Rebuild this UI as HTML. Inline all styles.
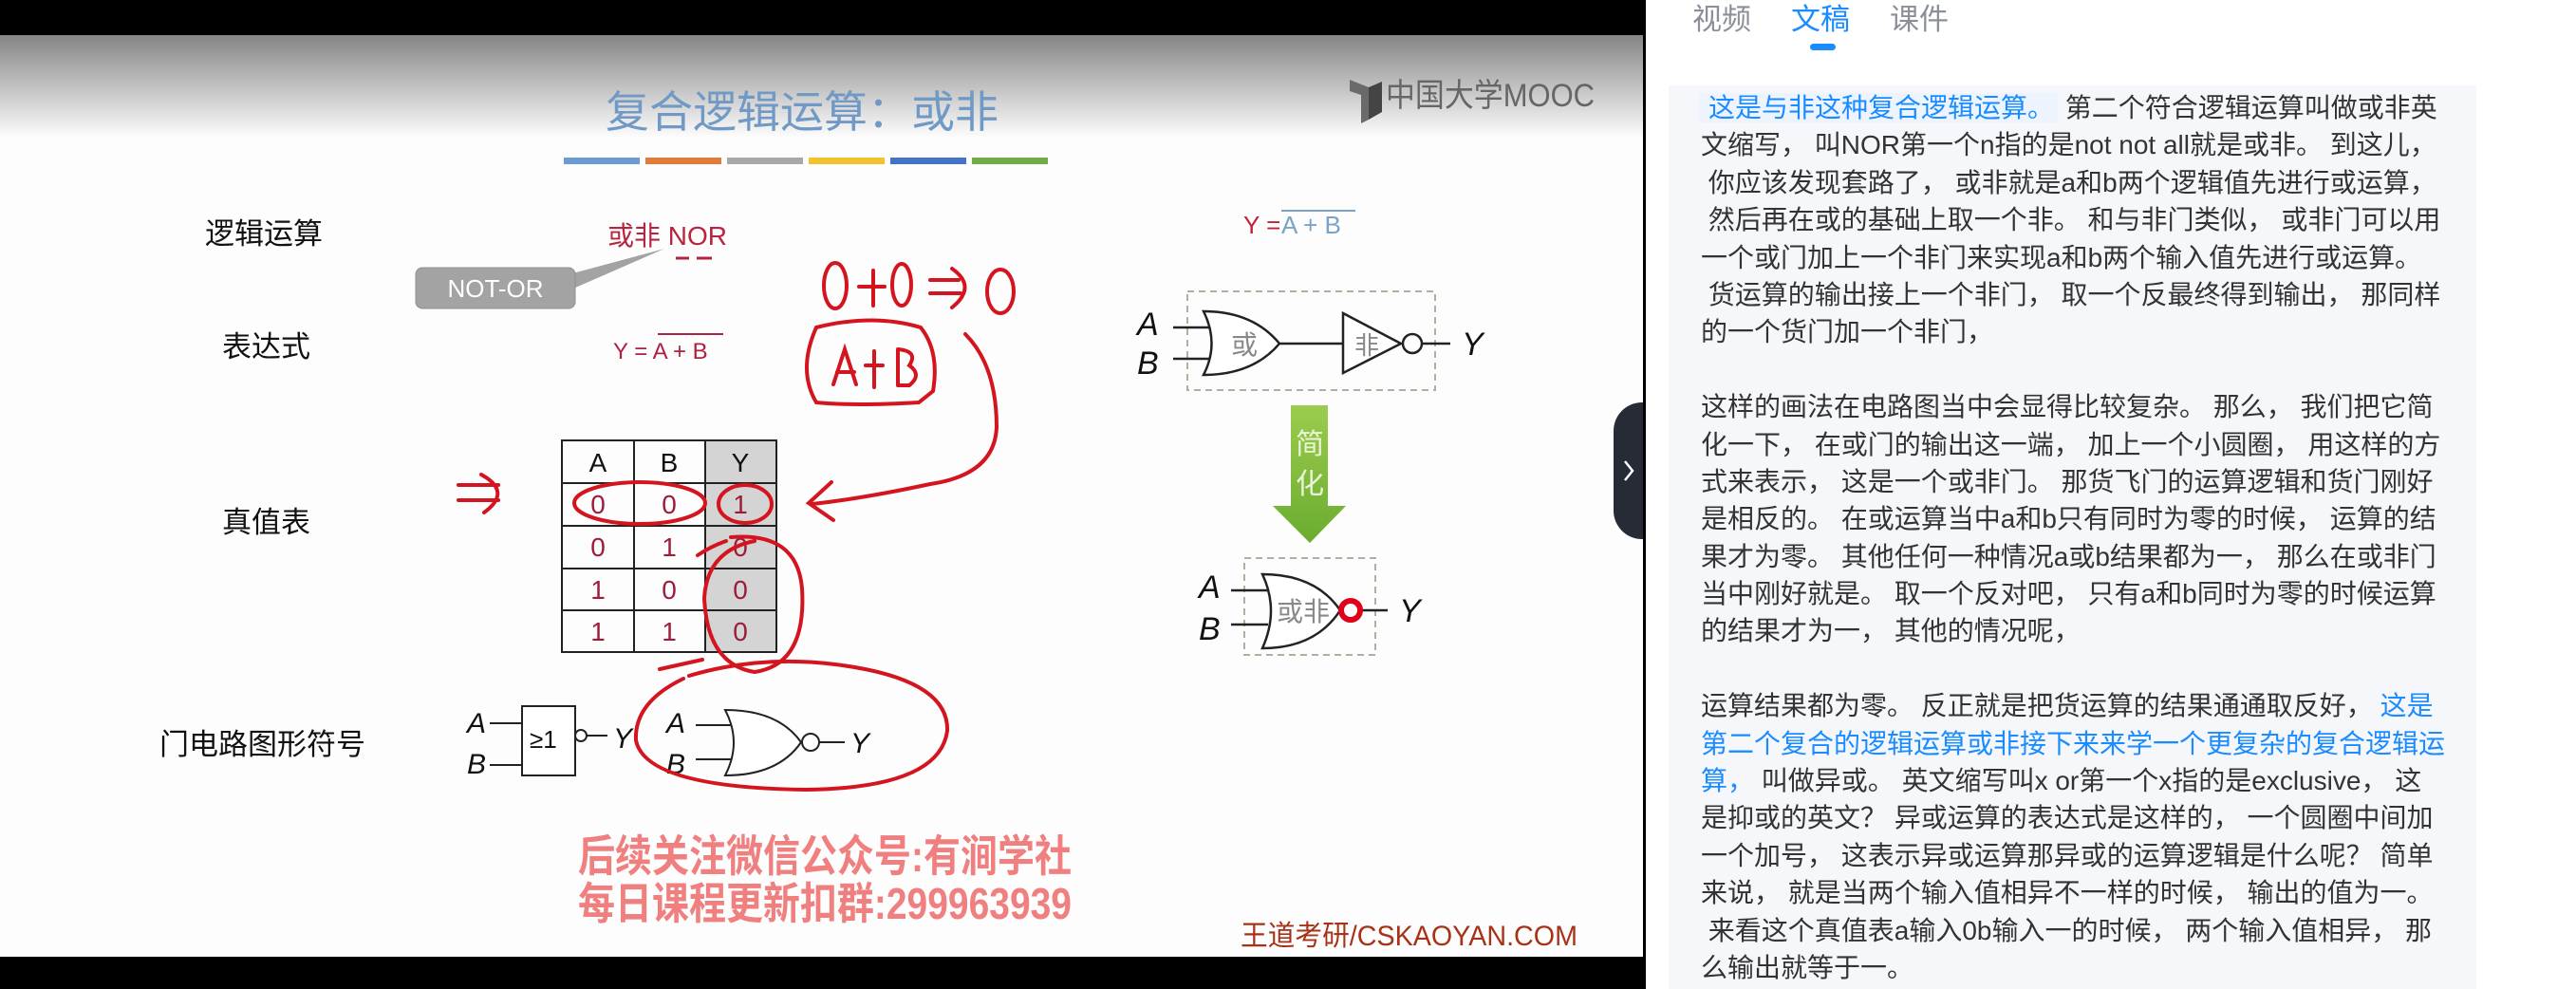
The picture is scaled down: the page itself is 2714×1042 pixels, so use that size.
<!DOCTYPE html>
<html><head><meta charset="utf-8">
<style>
html,body{margin:0;padding:0;width:2714px;height:1042px;overflow:hidden;background:#fff;}
.cjk{font-family:"Liberation Sans","Noto Sans CJK SC",sans-serif;}
#vid{position:absolute;left:0;top:0;}
.tabs{position:absolute;top:0;left:1783px;font-size:31px;color:#8a8f99;font-family:"Liberation Sans","Noto Sans CJK SC",sans-serif;line-height:42px;}
.tabs span{position:absolute;white-space:nowrap;}
.ul{position:absolute;left:1907px;top:46px;width:27px;height:7px;border-radius:4px;background:#1a8cff;}
.panel{position:absolute;left:1758px;top:90px;width:851px;height:952px;background:#f5f7fb;}
.txt{position:absolute;left:1792px;top:94px;font-size:28px;line-height:39.4px;color:#333;font-family:"Liberation Sans","Noto Sans CJK SC",sans-serif;white-space:nowrap;}
.txt div{height:39.4px;line-height:39.4px;overflow:visible;}
.b{color:#1a8cff;}
.hl{background:#edf4fd;color:#1a8cff;padding:0 4px 0 10px;margin-left:-2px;}
.handle{position:absolute;left:1700px;top:424px;width:31px;height:144px;background:#262b36;border-radius:30px 0 0 30px;}
</style></head><body>
<svg id="vid" width="1734" height="1042" viewBox="0 0 1734 1042" xmlns="http://www.w3.org/2000/svg">
<defs>
<linearGradient id="hg" x1="0" y1="0" x2="0" y2="1"><stop offset="0" stop-color="#858585"/><stop offset="1" stop-color="#ffffff"/></linearGradient>
<linearGradient id="gg" x1="0" y1="0" x2="0" y2="1"><stop offset="0" stop-color="#9ccc4e"/><stop offset="1" stop-color="#6aac2f"/></linearGradient>
</defs>
<rect x="0" y="0" width="1734" height="1042" fill="#fdfdfd"/>
<rect x="0" y="37" width="1731" height="110" fill="url(#hg)"/>
<rect x="0" y="0" width="1734" height="37" fill="#000"/>
<rect x="0" y="1008" width="1734" height="34" fill="#000"/>
<rect x="1731" y="0" width="3" height="1042" fill="#000"/>
<g class="cjk" font-family="Liberation Sans, Noto Sans CJK SC, sans-serif">
<text x="845" y="134" font-size="46" fill="#7099c6" text-anchor="middle">复合逻辑运算：或非</text>
<rect x="594" y="166" width="80" height="7" fill="#6b9bd1"/>
<rect x="680" y="166" width="80" height="7" fill="#e07b39"/>
<rect x="766" y="166" width="80" height="7" fill="#a8a8a8"/>
<rect x="852" y="166" width="80" height="7" fill="#f2c12e"/>
<rect x="938" y="166" width="80" height="7" fill="#4472c4"/>
<rect x="1024" y="166" width="80" height="7" fill="#70ad47"/>
<path d="M1422 84 L1442 92 L1442 126 L1434 130 L1434 100 L1422 96 Z" fill="#6a6a6a"/>
<path d="M1442 92 L1456 86 L1456 118 L1442 126 Z" fill="#444"/>
<text x="1460" y="112" font-size="34" fill="#666" textLength="220" lengthAdjust="spacingAndGlyphs">中国大学MOOC</text>
<text x="216" y="257" font-size="31" fill="#111">逻辑运算</text>
<text x="234" y="376" font-size="31" fill="#111">表达式</text>
<text x="234" y="561" font-size="31" fill="#111">真值表</text>
<text x="168" y="795" font-size="31" fill="#111">门电路图形符号</text>
<text x="640" y="258" font-size="28" fill="#b5253f">或非 NOR</text>
<path d="M712 272 h14 M734 272 h16" stroke="#b5253f" stroke-width="3"/>
<path d="M596 290 L700 262 L604 304 Z" fill="#a3a3a3"/>
<rect x="438" y="282" width="168" height="43" rx="7" fill="#a3a3a3" stroke="#8f8f8f"/>
<text x="522" y="313" font-size="26" fill="#fff" text-anchor="middle">NOT-OR</text>
<text x="646" y="378" font-size="24" fill="#b02040">Y = A + B</text>
<line x1="693" y1="352" x2="762" y2="352" stroke="#b02040" stroke-width="2"/>
<rect x="743" y="464" width="75" height="223" fill="#d4d4d4"/>
<g stroke="#222" stroke-width="2" fill="none">
<rect x="592" y="464" width="226" height="223"/>
<line x1="668" y1="464" x2="668" y2="687"/><line x1="743" y1="464" x2="743" y2="687"/>
<line x1="592" y1="509" x2="818" y2="509"/><line x1="592" y1="554" x2="818" y2="554"/>
<line x1="592" y1="599" x2="818" y2="599"/><line x1="592" y1="643" x2="818" y2="643"/>
</g>
<g font-size="28" text-anchor="middle">
<text x="630" y="497" fill="#111">A</text><text x="705" y="497" fill="#111">B</text><text x="780" y="497" fill="#111">Y</text>
<g fill="#9c1c3a">
<text x="630" y="541">0</text><text x="705" y="541">0</text><text x="780" y="541">1</text>
<text x="630" y="586">0</text><text x="705" y="586">1</text><text x="780" y="586">0</text>
<text x="630" y="631">1</text><text x="705" y="631">0</text><text x="780" y="631">0</text>
<text x="630" y="675">1</text><text x="705" y="675">1</text><text x="780" y="675">0</text>
</g></g>
<text x="1310" y="246" font-size="26" fill="#c0203a">Y =</text>
<text x="1350" y="246" font-size="26" fill="#7aa3c8">A + B</text>
<line x1="1350" y1="222" x2="1428" y2="222" stroke="#7aa3c8" stroke-width="2"/>
<rect x="1251" y="307" width="261" height="104" fill="none" stroke="#b0b0a0" stroke-width="2" stroke-dasharray="7 5"/>
<g stroke="#222" stroke-width="2.5" fill="none">
<line x1="1236" y1="345" x2="1275" y2="345"/><line x1="1236" y1="378" x2="1275" y2="378"/>
<path d="M1268 328 Q1320 328 1348 362 Q1320 395 1268 395 Q1285 362 1268 328 Z" fill="#fff"/>
<line x1="1348" y1="362" x2="1415" y2="362"/>
<path d="M1415 330 L1415 393 L1476 362 Z" fill="#fff"/>
<circle cx="1488" cy="362" r="10" fill="#fff"/>
<line x1="1498" y1="362" x2="1528" y2="362"/>
</g>
<text x="1311" y="373" font-size="28" fill="#888" text-anchor="middle">或</text>
<text x="1440" y="373" font-size="26" fill="#888" text-anchor="middle">非</text>
<g font-size="34" font-style="italic" fill="#111">
<text x="1198" y="353">A</text><text x="1198" y="394">B</text><text x="1540" y="374">Y</text>
</g>
<path d="M1360 427 H1399 V533 H1418 L1380 572 L1341 533 H1360 Z" fill="url(#gg)"/>
<text x="1380" y="478" font-size="30" fill="#eaf5d8" text-anchor="middle">简</text>
<text x="1380" y="520" font-size="30" fill="#eaf5d8" text-anchor="middle">化</text>
<rect x="1311" y="588" width="138" height="102" fill="none" stroke="#b0b0a0" stroke-width="2" stroke-dasharray="7 5"/>
<g stroke="#222" stroke-width="2.5" fill="none">
<line x1="1297" y1="622" x2="1336" y2="622"/><line x1="1297" y1="658" x2="1336" y2="658"/>
<path d="M1330 605 Q1386 605 1412 643 Q1386 683 1330 683 Q1348 643 1330 605 Z" fill="#fff"/>
<line x1="1434" y1="643" x2="1462" y2="643"/>
</g>
<circle cx="1423" cy="643" r="10" fill="none" stroke="#e0001a" stroke-width="6"/>
<text x="1373" y="654" font-size="28" fill="#888" text-anchor="middle">或非</text>
<g font-size="34" font-style="italic" fill="#111">
<text x="1263" y="630">A</text><text x="1263" y="674">B</text><text x="1474" y="655">Y</text>
</g>
<g stroke="#222" stroke-width="2" fill="none">
<line x1="516" y1="762" x2="550" y2="762"/><line x1="516" y1="806" x2="550" y2="806"/>
<rect x="550" y="744" width="56" height="73" fill="#fff"/>
<circle cx="612" cy="775" r="6"/><line x1="618" y1="775" x2="640" y2="775"/>
<line x1="733" y1="764" x2="770" y2="764"/><line x1="733" y1="800" x2="770" y2="800"/>
<path d="M764 748 Q820 748 844 782 Q820 817 764 817 Q782 782 764 748 Z" fill="#fff"/>
<circle cx="854" cy="782" r="9" fill="#fff"/><line x1="863" y1="782" x2="890" y2="782"/>
</g>
<text x="558" y="788" font-size="26" fill="#111">≥1</text>
<g font-size="30" font-style="italic" fill="#111">
<text x="492" y="772">A</text><text x="492" y="815">B</text><text x="646" y="788">Y</text>
<text x="702" y="772">A</text><text x="702" y="815">B</text><text x="896" y="793">Y</text>
</g>
<g stroke="#d4141e" stroke-width="4" fill="none" stroke-linecap="round">
<ellipse cx="880" cy="301" rx="12" ry="24"/>
<path d="M905 302 H932 M920 285 V322"/>
<ellipse cx="950" cy="300" rx="10" ry="22"/>
<path d="M980 295 H1010 M980 309 H1012 M1003 283 Q1030 302 1003 324"/>
<ellipse cx="1054" cy="307" rx="14" ry="23"/>
<path d="M860 345 Q920 330 970 345 Q990 370 983 412 L968 424 Q900 428 860 424 Q840 390 860 345 Z"/>
<path d="M878 405 L890 368 L902 405 M882 392 H900 M912 385 H930 M921 370 V408 M946 368 V406 M946 368 Q968 370 958 385 Q972 395 958 406 L946 406"/>
<path d="M1017 352 Q1050 385 1050 450 Q1048 500 980 510 Q910 525 856 531 M876 508 L852 530 L878 548"/>
<path d="M483 511 H525 M483 527 H525 M507 500 Q540 518 510 540"/>
<ellipse cx="674" cy="530" rx="69" ry="22"/>
<ellipse cx="785" cy="531" rx="28" ry="20"/>
<path d="M770 566 Q840 560 845 620 Q850 700 795 708 Q745 700 742 630 Q745 580 795 570 M735 585 Q750 575 765 570"/>
<path d="M726 712 Q800 690 880 700 Q1000 715 998 770 Q990 830 850 832 Q680 830 670 780 Q668 740 720 715 M695 705 L740 695"/>
</g>
<text x="869" y="918" font-size="46" font-weight="bold" fill="#f07f7f" text-anchor="middle" textLength="520" lengthAdjust="spacingAndGlyphs">后续关注微信公众号:有涧学社</text>
<text x="869" y="968" font-size="46" font-weight="bold" fill="#f07f7f" text-anchor="middle" textLength="520" lengthAdjust="spacingAndGlyphs">每日课程更新扣群:299963939</text>
<text x="1307" y="996" font-size="30" fill="#a83218" textLength="355" lengthAdjust="spacingAndGlyphs">王道考研/CSKAOYAN.COM</text>
</g>
</svg>
<div class="handle"><svg width="31" height="144" style="position:absolute;left:0;top:0"><path d="M12 62 L20 72 L12 82" stroke="#fff" stroke-width="2.5" fill="none"/></svg></div>
<div class="tabs"><span style="left:0">视频</span><span style="left:104px;color:#1a8cff">文稿</span><span style="left:208px">课件</span></div>
<div class="ul"></div>
<div class="panel"></div>
<div class="txt">
<div><span class="hl">这是与非这种复合逻辑运算。</span> 第二个符合逻辑运算叫做或非英</div>
<div>文缩写， 叫NOR第一个n指的是not not all就是或非。 到这儿，</div>
<div>&nbsp;你应该发现套路了， 或非就是a和b两个逻辑值先进行或运算，</div>
<div>&nbsp;然后再在或的基础上取一个非。 和与非门类似， 或非门可以用</div>
<div>一个或门加上一个非门来实现a和b两个输入值先进行或运算。</div>
<div>&nbsp;货运算的输出接上一个非门， 取一个反最终得到输出， 那同样</div>
<div>的一个货门加一个非门，</div>
<div>&nbsp;</div>
<div>这样的画法在电路图当中会显得比较复杂。 那么， 我们把它简</div>
<div>化一下， 在或门的输出这一端， 加上一个小圆圈， 用这样的方</div>
<div>式来表示， 这是一个或非门。 那货飞门的运算逻辑和货门刚好</div>
<div>是相反的。 在或运算当中a和b只有同时为零的时候， 运算的结</div>
<div>果才为零。 其他任何一种情况a或b结果都为一， 那么在或非门</div>
<div>当中刚好就是。 取一个反对吧， 只有a和b同时为零的时候运算</div>
<div>的结果才为一， 其他的情况呢，</div>
<div>&nbsp;</div>
<div>运算结果都为零。 反正就是把货运算的结果通通取反好， <span class="b">这是</span></div>
<div class="b">第二个复合的逻辑运算或非接下来来学一个更复杂的复合逻辑运</div>
<div><span class="b">算，</span> 叫做异或。 英文缩写叫x or第一个x指的是exclusive， 这</div>
<div>是抑或的英文？ 异或运算的表达式是这样的， 一个圆圈中间加</div>
<div>一个加号， 这表示异或运算那异或的运算逻辑是什么呢？ 简单</div>
<div>来说， 就是当两个输入值相异不一样的时候， 输出的值为一。</div>
<div>&nbsp;来看这个真值表a输入0b输入一的时候， 两个输入值相异， 那</div>
<div>么输出就等于一。</div>
</div>
</body></html>
